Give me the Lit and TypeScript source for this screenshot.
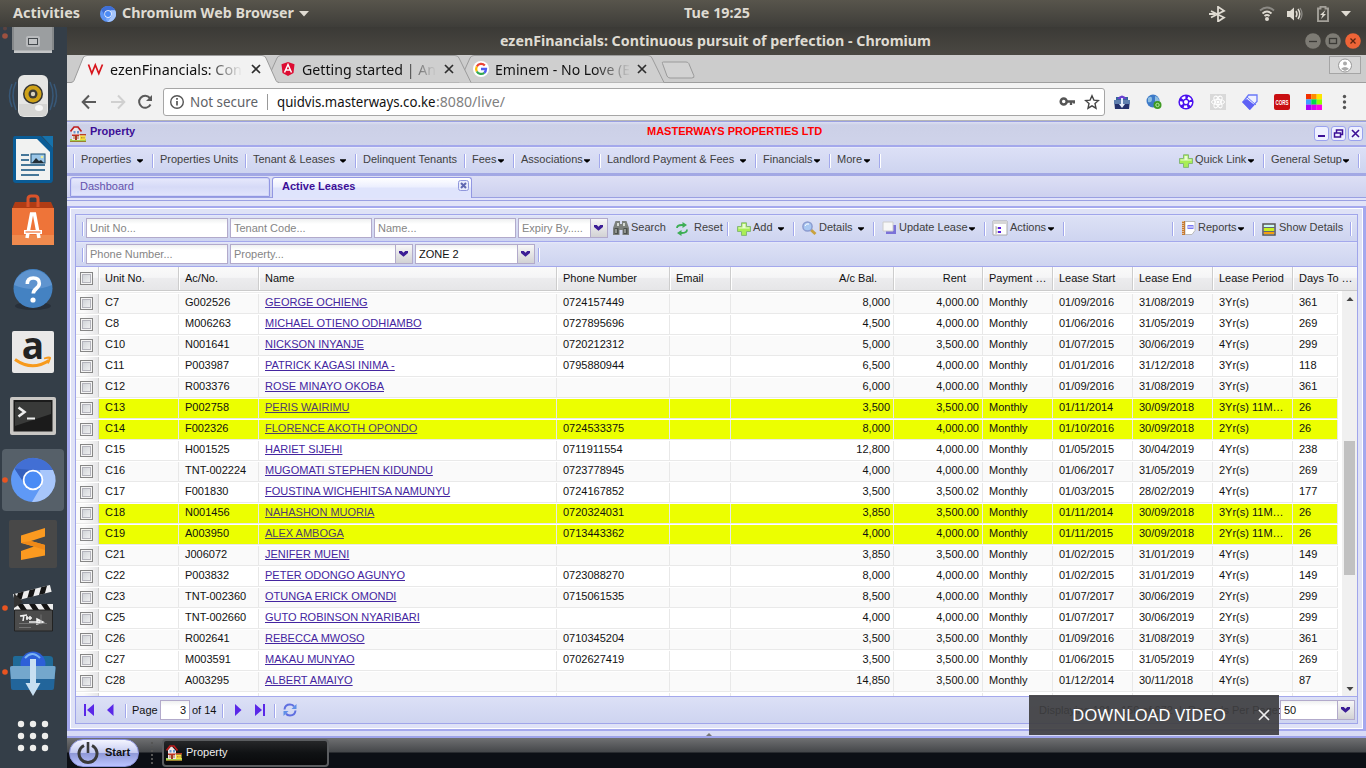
import { LitElement, html, svg, css, nothing } from "lit";
import { customElement } from "lit/decorators.js";

type Lease = [string, string, string, string, string, string, string, string, string, string];

const LEASES: Lease[] = [
  ["C7", "G002526", "GEORGE OCHIENG", "0724157449", "8,000", "4,000.00", "01/09/2016", "31/08/2019", "3Yr(s)", "361"],
  ["C8", "M006263", "MICHAEL OTIENO ODHIAMBO", "0727895696", "4,500", "4,000.00", "01/06/2016", "31/05/2019", "3Yr(s)", "269"],
  ["C10", "N001641", "NICKSON INYANJE", "0720212312", "5,000", "3,500.00", "01/07/2015", "30/06/2019", "4Yr(s)", "299"],
  ["C11", "P003987", "PATRICK KAGASI INIMA -", "0795880944", "6,500", "4,000.00", "01/01/2016", "31/12/2018", "3Yr(s)", "118"],
  ["C12", "R003376", "ROSE MINAYO OKOBA", "", "6,000", "4,000.00", "01/09/2016", "31/08/2019", "3Yr(s)", "361"],
  ["C13", "P002758", "PERIS WAIRIMU", "", "3,500", "3,500.00", "01/11/2014", "30/09/2018", "3Yr(s) 11M…", "26"],
  ["C14", "F002326", "FLORENCE AKOTH OPONDO", "0724533375", "8,000", "4,000.00", "01/10/2016", "30/09/2018", "2Yr(s)", "26"],
  ["C15", "H001525", "HARIET SIJEHI", "0711911554", "12,800", "4,000.00", "01/05/2015", "30/04/2019", "4Yr(s)", "238"],
  ["C16", "TNT-002224", "MUGOMATI STEPHEN KIDUNDU", "0723778945", "4,000", "4,000.00", "01/06/2017", "31/05/2019", "2Yr(s)", "269"],
  ["C17", "F001830", "FOUSTINA WICHEHITSA NAMUNYU", "0724167852", "3,500", "3,500.02", "01/03/2015", "28/02/2019", "4Yr(s)", "177"],
  ["C18", "N001456", "NAHASHON MUORIA", "0720324031", "3,850", "3,500.00", "01/11/2014", "30/09/2018", "3Yr(s) 11M…", "26"],
  ["C19", "A003950", "ALEX AMBOGA", "0713443362", "4,000", "4,000.00", "01/11/2015", "30/09/2018", "2Yr(s) 11M…", "26"],
  ["C21", "J006072", "JENIFER MUENI", "", "3,850", "3,500.00", "01/02/2015", "31/01/2019", "4Yr(s)", "149"],
  ["C22", "P003832", "PETER ODONGO AGUNYO", "0723088270", "8,000", "4,000.00", "01/02/2015", "31/01/2019", "4Yr(s)", "149"],
  ["C23", "TNT-002360", "OTUNGA ERICK OMONDI", "0715061535", "8,500", "4,000.00", "01/07/2017", "30/06/2019", "2Yr(s)", "299"],
  ["C25", "TNT-002660", "GUTO ROBINSON NYARIBARI", "", "4,000", "4,000.00", "01/07/2017", "30/06/2019", "2Yr(s)", "299"],
  ["C26", "R002641", "REBECCA MWOSO", "0710345204", "3,500", "3,500.00", "01/09/2016", "31/08/2019", "3Yr(s)", "361"],
  ["C27", "M003591", "MAKAU MUNYAO", "0702627419", "3,500", "3,500.00", "01/06/2015", "31/05/2019", "4Yr(s)", "269"],
  ["C28", "A003295", "ALBERT AMAIYO", "", "14,850", "3,500.00", "01/12/2014", "30/11/2018", "4Yr(s)", "87"],
];

const HEADS = ["Unit No.", "Ac/No.", "Name", "Phone Number", "Email", "A/c Bal.", "Rent", "Payment …", "Lease Start", "Lease End", "Lease Period", "Days To …"];

/* Text run set to an exact advance width. */
const run = (text: string, w: number, size: number, fill: string, bold = false, y = 16) => html`<svg class="run" width=${w + 2} height="22"><text x="0" y=${y} textLength=${w} lengthAdjust="spacingAndGlyphs" font-size=${size} font-weight=${bold ? 700 : 400} fill=${fill}>${text}</text></svg>`;

/* Slots laid end to end; each entry is the slot's start and its content. */
const track = (start: number, end: number, slots: [number, unknown][]) => {
  const first = slots[0][0] - start;
  return slots.map((s, i) => {
    const w = (i + 1 < slots.length ? slots[i + 1][0] : end) - s[0];
    return html`<div class="slot" style="width:${w}px;margin-left:${i ? 0 : first}px">${s[1]}</div>`;
  });
};

const arrow = html`<svg class="arrow" width="6" height="4"><path d="M0 .3h6v.9L3.600 3.600H2.400L0 1.200z" fill="#000"/></svg>`;
const sep = html`<i class="sep"></i>`;
const menu = (text: string, drop = false) => html`${sep}<span class="mt">${text}</span>${drop ? arrow : nothing}`;
const plus = html`<svg width="14" height="14"><path d="M4.500.8h5v3.700h4v5h-4v3.900h-5V9.500h-4v-5h4z" fill="#a9ee55" stroke="#86b878"/><path d="M5.500 2h3v3.500h4v1H1.500v-1h4z" fill="#e9fbd5"/></svg>`;
const house = (s = 16) => html`<svg width=${s} height=${s} viewBox="0 0 16 16"><path d="M0 13h16v3H0z" fill="#a5cf50"/><path d="M0 15h16v1H0z" fill="#9a8030"/><path d="M2 5l3.500-4L10 6v8H2z" fill="#f0e8e8"/><path d="M.5 5.500L4 1h4l3.500 4.500" fill="none" stroke="#c01c1c" stroke-width="1.600"/><path d="M3.500 5h2v2.500h-2zm3.500 0h2v2.500H7z" fill="#6a9ad0"/><path d="M2 8.500h7V10H2z" fill="#c03020"/><path d="M3 10h2v3H3zm4 0h2v3H7z" fill="#c8a890"/><path d="M5 10h2v4H5z" fill="#a83820"/><path d="M9.500 8h6.500v1.500H9.500z" fill="#b8402a"/><path d="M10 9.500h5.500V14H10z" fill="#f7dc40"/><path d="M11 11h1.500v1.500H11zm2.500 0h1v1.500h-1z" fill="#b89030"/></svg>`;
const chev = html`<svg width="9" height="6"><path d="M0 0h2.800L4.500 1.700 6.200 0H9v2L4.500 5.800 0 2z" fill="#3c1e96"/></svg>`;
const trigger = html`<span class="trigger">${chev}</span>`;
const field = (text: string, w: number, combo = false, value = false) => html`<div class="field ${value ? "value" : ""}" style="width:${w}px"><span>${text}</span>${combo ? trigger : nothing}</div>`;

const chromium = (s: number) => html`<svg width=${s} height=${s} viewBox="0 0 44 44"><circle cx="22" cy="22" r="22" fill="#5c94f4"/><path d="M3.500 10.500A22 22 0 0 1 41.700 12H22l-8.500 15z" fill="#3f6fd6"/><path d="M41.700 12A22 22 0 0 1 21 44l10.500-16.500L29 12z" fill="#a5c5fb"/><path d="M31 27.500L21 44l-5-8 5-6z" fill="#7aa9f8"/><circle cx="22" cy="22" r="10" fill="#fff"/><circle cx="22" cy="22" r="8.200" fill="#4d8cf5"/></svg>`;

const dockSvg = (body: unknown) => html`<svg width="66" height="64" viewBox="0 0 66 64">${body}</svg>`;

const DOCK = [
  svg`<path d="M12 24h42v26H12z" fill="#85888a"/><path d="M14 24h38v29H14z" fill="#9b9ea0"/><path d="M14 50.500h38v2.500H14z" fill="#c4c6c7"/><rect x="26" y="36" width="14" height="11" rx="2" fill="#b9bbbd"/><rect x="28.500" y="38.500" width="9" height="6" fill="#c2c4c6" stroke="#44494d"/><circle cx="5" cy="36" r="2.800" fill="#9c5140"/><circle cx="5" cy="28.500" r="2" fill="#5c4340"/>`,
  svg`<g fill="none" stroke="#385878" stroke-width="1.500"><path d="M16 18q-6 13 0 28M12 20q-5 12 0 23M50 18q6 13 0 28M54 20q5 12 0 23"/></g><rect x="18" y="11" width="30" height="42" rx="6" fill="#e6e6e4"/><path d="M19 40h28v7q0 5-4 5H23q-4 0-4-5z" fill="#d6d6d4"/><circle cx="33" cy="30" r="10" fill="#333"/><circle cx="33" cy="30" r="8.500" fill="#cfa218"/><circle cx="33" cy="30" r="4.500" fill="#3b3b38"/><circle cx="33" cy="30" r="2.200" fill="#d9d3c0"/><ellipse cx="39" cy="44" rx="4" ry="3" fill="#f6f6f6"/>`,
  svg`<path d="M15 8h26l12 12v31q0 4-3 4H16q-3 0-3-3V11q0-3 2-3z" fill="#0a5c96"/><path d="M42 8h11v12z" fill="#1672ac"/><path d="M16 11h21l13 13v28H16z" fill="#f1f2f1"/><path d="M21 27h8m-8 5h8m-8 5h24m-24 5h24m-24 5h18" stroke="#0d4f7c" stroke-width="1.700"/><path d="M21 23h8" stroke="#0d4f7c" stroke-width="0"/><rect x="31" y="26" width="14" height="9" fill="#9ac6e8" stroke="#164b70"/><path d="M32 35l4-5 3 3 2-1 3 3z" fill="#222e36"/><circle cx="42" cy="29" r="1.300" fill="#ee9"/>`,
  svg`<path d="M12 17l3-7h36l3 7z" fill="#b03c14"/><path d="M12 16h42v37H12z" fill="#ee7439"/><path d="M12 43h42v10H12z" fill="#f08a4e"/><path d="M28 15V7q0-3 3-3h4q3 0 3 3v8" fill="none" stroke="#d9532a" stroke-width="3"/><path d="M27 46l4.500-24h3L39 46" fill="none" stroke="#fff" stroke-width="3.500"/><path d="M24 40h18" stroke="#fff" stroke-width="4"/><path d="M25.500 40h15" stroke="#ee7439" stroke-width="1.200"/>`,
  svg`<ellipse cx="33" cy="50" rx="18" ry="4" fill="#28303a"/><circle cx="33" cy="32.500" r="19.500" fill="#4482c2"/><path d="M14 29a19.500 19.500 0 0 1 38 0q-19 8-38 0z" fill="#5f94cf"/><path d="M27.300 28q0-6 6-6t6 5.500c0 5-6 5-6 10" fill="none" stroke="#fff" stroke-width="3.600"/><circle cx="33" cy="44" r="2.600" fill="#fff"/>`,
  svg`<rect x="12" y="11" width="42" height="42" rx="2" fill="#e9e8e8"/><text x="33" y="39" text-anchor="middle" font-family="Open Sans" font-weight="700" font-size="37" fill="#222">a</text><path d="M15 39.500q17 12 34 1" fill="none" stroke="#f79a1c" stroke-width="3"/><path d="M44 38.500q7-2 6 0t-2 5" fill="none" stroke="#f79a1c" stroke-width="1.800"/>`,
  svg`<rect x="10" y="13" width="46" height="38" rx="2" fill="#c9c7c4"/><rect x="13.500" y="16" width="39" height="31.500" fill="#1b1b1b"/><path d="M15 18h36v12L15 42z" fill="#393a39"/><path d="M18.500 23.500l6 4.500-6 4.500" fill="none" stroke="#eee" stroke-width="2.600"/><path d="M27 34.500h8" stroke="#eee" stroke-width="2"/>`,
  svg`<rect x="2" y="1" width="62" height="62" rx="4" fill="#566069"/><g transform="translate(11 10)"><circle cx="22" cy="22" r="22" fill="#5f99f6"/><path d="M3.500 10.500A22 22 0 0 1 42 12H22l-9 13z" fill="#426fd4"/><path d="M3.500 10.500L22 12l-9 13z" fill="#3560bd"/><path d="M42 12A22 22 0 0 1 21 44l10-17L29 12z" fill="#a7c6fb"/><circle cx="22" cy="22" r="10.300" fill="#fff"/><circle cx="22" cy="22" r="8.500" fill="#4a8bf5"/></g><circle cx="5" cy="32" r="2.800" fill="#e95420"/>`,
  svg`<rect x="9" y="8" width="48" height="48" rx="2" fill="#484848"/><path d="M21 23.500l24-7.500v8.500L31 29l14 4v10.500L21 48v-9l13-4.500L21 31z" fill="#fb9a20"/><path d="M21 30.500l10-1.500 14 4v5z" fill="#f08a18"/>`,
  svg`<g transform="rotate(-14 15 26)"><path d="M15 18h38v7H15z" fill="#eee"/><path d="M20 18h6l-4 7h-6zm12 0h6l-4 7h-6zm12 0h6l-4 7h-6z" fill="#151515"/></g><path d="M14 28h39v6H14z" fill="#eee"/><path d="M17 28h6l4 6h-6zm12 0h6l4 6h-6zm12 0h6l4 6h-6z" fill="#151515"/><path d="M14 17l9 9-9 6z" fill="#333"/><path d="M14.500 34h38v21h-38z" fill="#4b4b4b" stroke="#222"/><path d="M20 40l7-1m-3 0l-1 6m4-5v4m3-4v4m-4-2h6m-3 4h7m0 0h6m-5-3l6 3-6 2z" stroke="#f2f2f2" stroke-width="1.500" fill="none"/><path d="M19 47.500h28m-28 4h12m10-13v10" stroke="#858585" stroke-width=".7"/><circle cx="5" cy="32" r="2.800" fill="#e95420"/>`,
  svg`<path d="M13 18q0-2 2-2h34q4 0 4 3v20H13z" fill="#1f6a98"/><circle cx="33" cy="24" r="12.500" fill="#2d5fd8"/><path d="M25 18q7-8 15 0" stroke="#7cb4f5" stroke-width="2" fill="none"/><path d="M10 28q0-2 2-2h42q2 0 1.500 2L54 48q0 2-2 2H13q-2 0-2-2z" fill="#22659b"/><path d="M10 28q0-2 2-2h42q2 0 1.500 2L54.500 39H11z" fill="#74a7cd"/><path d="M30 19h6v24h4.500l-7.500 13-7.500-13H30z" fill="#c8dff1"/><circle cx="5" cy="32" r="2.800" fill="#e95420"/>`,
  svg`${[20, 32, 44].map((y) => [21, 33, 45].map((x) => svg`<circle cx=${x} cy=${y} r="3.200" fill="#eeeeec"/>`))}`,
];

@customElement("app-root")
export class AppRoot extends LitElement {
  static styles = css`
    :host { display: block; width: 1366px; height: 768px; overflow: hidden; position: relative; font: 11px/13px "Liberation Sans", Arial, sans-serif; color: #111; }
    * { box-sizing: border-box; }
    svg { display: block; flex: none; }
    .run { overflow: visible; font-family: "Noto Sans", sans-serif; }
    .screen { display: grid; grid-template: 27px 741px / 67px 1299px; }
    .panel { grid-column: 1 / 3; display: flex; background: linear-gradient(#58554c, #3e3d39); align-items: center; }
    .slot { display: flex; align-items: center; flex: none; height: 100%; min-width: 0; white-space: nowrap; }
    .dock { background: #343e48; display: flex; flex-direction: column; justify-content: flex-end; overflow: hidden; }
    .win { display: flex; flex-direction: column; overflow: hidden; min-width: 0; }
    .title { height: 28px; display: flex; background: linear-gradient(#3b3a36, #4a4842); flex: none; }
    .tabs { height: 28px; display: grid; background: #ccc; flex: none; }
    .tabs > * { grid-area: 1 / 1; }
    .tabrow { display: flex; height: 28px; }
    .clip { overflow: hidden; -webkit-mask-image: linear-gradient(90deg, #000 72%, transparent 99%); }
    .nav { height: 38px; display: flex; background: #f2f2f2; border-bottom: 1px solid #b4b4b4; flex: none; }
    .omni { height: 28px; width: 942px; background: #fff; border: 1px solid #a6a6a6; border-radius: 3px; display: flex; align-items: center; }
    .page { flex: 1; background: #dfe1f7; display: flex; flex-direction: column; border-top: 1px solid #9aa0e2; }
    .head { height: 23px; flex: none; background: linear-gradient(#dcdff2 0, #ccd0e7 3px, #cfd3ea); display: flex; align-items: flex-start; font-weight: bold; }
    .head .slot { height: 19px; }
    .purple { color: #3c0f96; }
    .red { color: #f00; }
    .tool { width: 15px; height: 15px; border: 1px solid #9aa2ee; border-radius: 3px; background: #eef0ff; display: flex; margin-top: 4px; }
    .menubar { height: 31px; flex: none; border-top: 2px solid #a4a8ec; border-bottom: 3px solid #9da2e6; border-bottom-color: #a2a8e4; background: linear-gradient(#f4f5fe 0, #dce0f6 1px, #ced4f0); display: flex; color: #3f3f3f; }
    .sep { width: 2px; height: 14px; border-left: 1px solid #a2a8ec; border-right: 1px solid #fff; flex: none; margin-top: 1px; }
    .mt { margin-left: 6px; margin-top: -1px; }
    .arrow { margin: 2px 9px 0 auto; }
    .strip { height: 22px; flex: none; background: linear-gradient(#dddff5, #cdd1ef); border-bottom: 1px solid #9aa0e2; display: flex; padding-left: 3px; gap: 2px; }
    .tab { width: 200px; height: 20px; margin-top: 1px; border: 1px solid #9297e2; border-radius: 3px 3px 0 0; background: linear-gradient(#e7e9fc, #d6daf7 50%, #e2e5fc); box-shadow: inset 0 0 0 1px #d2d6f8; padding: 2px 0 0 9px; color: #6452ac; display: flex; }
    .tab.on { height: 21px; background: linear-gradient(#fff, #eceffe 45%, #dfe4fc 50%); color: #3c0f96; font-weight: bold; border-bottom: none; justify-content: space-between; box-shadow: none; padding-right: 2px; }
    .spacer { height: 8px; flex: none; background: linear-gradient(#e2e4fb 2px, #9aa0e2 2px, #9aa0e2 3px, #e1e3f8 3px); }
    .frame { flex: none; height: 525px; border: 2px solid #a4a8ee; border-right-width: 3px; border-left-width: 3px; padding: 6px 5px 5px 5px; box-shadow: inset 1px 1px #fff, inset -1px -1px #fff; background: #dfe2f6; }
    .box { height: 510px; border: 1px solid #a0a5ea; background: #fff; display: flex; flex-direction: column; }
    .tb { height: 27px; flex: none; border-bottom: 1px solid #a4a8ec; background: linear-gradient(#e6e9fa 0, #dce0f5 2px, #ced4f0); display: flex; color: #404040; }
    .tb.two { height: 25px; }
    .tb .lab { margin-left: 2px; margin-top: -1px; }
    .field { height: 20px; border: 1px solid #b2aacb; background: linear-gradient(#eef0f0, #fff 5px); color: #858585; display: flex; align-items: center; padding-left: 3px; }
    .field.value { color: #111; }
    .field span:first-child { flex: 1; }
    .trigger { flex: none; width: 17px; height: 18px; border-left: 1px solid #b2aacb; background: linear-gradient(#f7f7f7, #d2d2d4); display: flex; align-items: center; justify-content: center; padding-right: 1px; }
    .gh, .gr { display: grid; grid-template-columns: 23px 80px 80px 298px 113px 61px 163px 89px 70px 80px 80px 80px 45px; }
    .gh { flex: none; height: 24px; grid-template-columns: 23px 80px 80px 298px 113px 61px 163px 89px 70px 80px 80px 80px 64px; background: linear-gradient(#fafafa, #f5f5f6 45%, #ececee 50%, #e6e6e8); border-bottom: 1px solid #cbcbcb; }
    .gh > div { border-right: 1px solid #cdcdcd; box-shadow: inset 1px 0 #fff; padding: 5px 3px 0 6px; overflow: hidden; white-space: nowrap; }
    .gh > div:last-child { border-right: none; padding-right: 0; }
    .gh > .chk, .gr > .chk { padding: 0 0 0 4px; display: flex; align-items: center; border-right: 1px solid #cfcfcf; }
    .gh > .r { padding-right: 16px; }
    .r { text-align: right; }
    .body { flex: 1; display: flex; min-height: 0; overflow: hidden; }
    .rows { width: 1265px; padding-top: 1px; }
    .pre { height: 1px; width: 1262px; background: #ededed; }
    .gr { width: 1262px; height: 21px; border-top: 1px solid #fff; border-bottom: 1px solid #e9e9e9; background: #fff; }
    .gr.alt { background: #fafafa; }
    .gr.hot > .c { background: #ecff00; }
    .gr > .c { border-right: 1px solid #e8e8e8; padding: 2px 2px 0 6px; white-space: nowrap; overflow: hidden; }
    .gr > .c.r { padding-right: 3px; }
    .gr > .chk { background: linear-gradient(90deg, #fafafa 35%, #e6e6e8); }
    .box13 { width: 13px; height: 13px; border: 1px solid #868686; background: linear-gradient(135deg, #c9cdd2, #f6f6f6); box-shadow: inset 0 0 0 1px #f4f4f4, inset 0 0 0 2px #b4b4bc; }
    u { color: #4425a0; text-underline-offset: 1px; }
    .hot u { color: #50406a; }
    .sb { width: 15px; background: #f0f0f0; display: flex; flex-direction: column; align-items: center; margin-left: 1px; padding-top: 1px; }
    .thumb { width: 11px; height: 134px; background: #c1c1c1; margin-top: 139px; }
    .sb svg:last-child { margin-top: auto; }
    .pager { height: 27px; flex: none; border-top: 1px solid #a4a8ec; background: linear-gradient(#dce0f6, #ced4f0); display: flex; }
    .pagenum { width: 30px; justify-content: flex-end; padding-right: 3px; }
    .field.pagenum span:first-child { flex: none; }
    .below { height: 7px; flex: none; background: #d8dbf6; border-bottom: 2px solid #9ea3ea; display: flex; justify-content: center; align-items: center; padding-right: 16px; }
    .task { height: 30px; flex: none; background: linear-gradient(#6f7072, #45474a 14px, #0c0f15 15px, #0c0f15); display: flex; align-items: center; padding-left: 2px; color: #eee; }
    .start { width: 70px; height: 28px; border-radius: 14px; border: 1px solid #8c93dc; background: linear-gradient(#f4f5ff, #c5cbf2 48%, #8e97d6 50%, #bac4ff); color: #111; font-weight: bold; display: flex; align-items: center; gap: 5px; padding-left: 6px; }
    .start span, .appbtn span { margin-top: -2px; }
    .grip { width: 2px; height: 22px; margin-left: 12px; background: repeating-linear-gradient(#555 0 2px, transparent 2px 4px); }
    .appbtn { width: 167px; height: 28px; margin-left: 9px; border: 2px solid #5b5d60; border-radius: 4px; background: linear-gradient(#262729, #101214 50%, #08090b); display: flex; align-items: center; gap: 4px; padding-left: 2px; }
    .toast { position: absolute; left: 1029px; top: 695px; width: 250px; height: 40px; background: rgba(62, 62, 64, .92); display: flex; align-items: center; padding-left: 43px; }
    .toast .x { margin-left: 30px; }
    .icotop { padding-top: 4px; }
    .ql { margin: -1px 0 0 2px; }
    .plus { padding-top: 2px; }
  `;

  private icon(w: number, body: unknown, h = 16) {
    return html`<svg width=${w} height=${h} viewBox="0 0 ${w} ${h}">${body}</svg>`;
  }

  private shell() {
    const x = html`<svg width="10" height="10"><path d="M1 1l8 8M9 1l-8 8" stroke="#2d2d2d" stroke-width="1.700"/></svg>`;
    return html`
      <div class="title">${track(67, 1366, [
        [500, run("ezenFinancials: Continuous pursuit of perfection - Chromium", 431, 14, "#dfdbd2", true)],
        [1305, this.icon(56, svg`<circle cx="8" cy="8" r="7.800" fill="#7d7b74"/><circle cx="28" cy="8" r="7.800" fill="#7d7b74"/><circle cx="48" cy="8" r="7.800" fill="#ee6437"/><path d="M4 8.500h8" stroke="#3b3a36" stroke-width="1.300"/><rect x="24.500" y="5.500" width="7" height="5" fill="none" stroke="#3b3a36" stroke-width="1.300"/><path d="M45.500 5.500l5 5m0-5l-5 5" stroke="#5b2410" stroke-width="1.300"/>`)],
      ])}</div>
      <div class="tabs">
        <svg width="1299" height="28"><path d="M0 27.500h1299" stroke="#9e9e9e"/>
          <path d="M392 27.500L403 3q1.200-2.500 4-2.500H581q3 0 4 2.500L597 27.500" fill="#cfcfcf" stroke="#9b9b9b"/>
          <path d="M199 27.500L210 3q1.200-2.500 4-2.500H388q3 0 4 2.500L404 27.500" fill="#cfcfcf" stroke="#9b9b9b"/>
          <path d="M0 27.500h4q2 0 3-2L16 3q1-2.500 4-2.500H195q3 0 4 2.500l10 22.500q1 2 3 2V28H0z" fill="#f2f2f2"/>
          <path d="M0 27.500h4q2 0 3-2L16 3q1-2.500 4-2.500H195q3 0 4 2.500l10 22.500q1 2 3 2" fill="none" stroke="#9b9b9b"/>
          <path d="M596.500 8.500q-1-1.500 1-1.500H620q2 0 2.800 1.500l5 12q1 2.500-2 2.500H604q-2 0-3-2z" transform="translate(-1 0)" fill="#d2d2d2" stroke="#9a9a9a"/>
          <rect x="1262.500" y="1.500" width="31" height="17" fill="#d6d6d6" stroke="#a5a5a5"/><circle cx="1278" cy="10.500" r="6.500" fill="#fff" stroke="#999"/><circle cx="1278" cy="8.500" r="2" fill="#aaa"/><path d="M1274 14q4-4 8 0l-4 2z" fill="#aaa"/></svg>
        <div class="tabrow">${track(67, 1366, [
          [87, this.icon(17, svg`<path d="M1.500 3.500l3.300 9L8.300 4l3.500 8.500 3.700-9" fill="none" stroke="#d8141c" stroke-width="1.700"/>`)],
          [109.500, html`<div class="clip">${run("ezenFinancials: Con", 132, 15, "#111", false, 17)}</div>`],
          [251, x],
          [281, this.icon(14, svg`<path d="M7 1l6.500 2.300-1 8.700L7 15l-5.500-3-1-8.700z" fill="#dd0b31"/><path d="M3.500 11.500L7 3.500l3.500 8M5 9h4" fill="none" stroke="#fff" stroke-width="1.500"/>`)],
          [302, html`<div class="clip">${run("Getting started | An", 134, 15, "#111", false, 17)}</div>`],
          [444, x],
          [473, this.icon(16, svg`<circle cx="8" cy="8" r="8" fill="#fff"/><g fill="none" stroke-width="2.300"><path d="M11.800 4.500A5 5 0 0 0 3.800 5.500" stroke="#ea4335"/><path d="M3.800 5.500a5 5 0 0 0 0 5" stroke="#fbbc05"/><path d="M3.800 10.500a5 5 0 0 0 7.500 1.300" stroke="#34a853"/><path d="M11.300 11.800A5 5 0 0 0 13 8H8" stroke="#4f5cf0"/></g>`)],
          [495, html`<div class="clip">${run("Eminem - No Love (E", 135, 15, "#111", false, 17)}</div>`],
          [637, x],
        ])}</div>
      </div>
      <div class="nav">${track(67, 1366, [
        [81, this.icon(16, svg`<path d="M15 8H2m6-6.500L1.700 8 8 14.500" fill="none" stroke="#5a5a5a" stroke-width="2"/>`)],
        [110, this.icon(16, svg`<path d="M1 8h13M8 1.500L14.300 8 8 14.500" fill="none" stroke="#d0d0d0" stroke-width="2"/>`)],
        [137, this.icon(16, svg`<path d="M13.500 10.500A6 6 0 1 1 12.800 4" fill="none" stroke="#5a5a5a" stroke-width="2"/><path d="M15 1v6H9z" fill="#5a5a5a"/>`)],
        [163, html`<div class="omni">${track(164, 1105, [
          [169, this.icon(16, svg`<circle cx="8" cy="8" r="6.300" fill="none" stroke="#555" stroke-width="1.400"/><path d="M8 7v4.500M8 4v1.700" stroke="#555" stroke-width="1.700"/>`)],
          [190, run("Not secure", 68, 14.5, "#5f6368")],
          [267, html`<svg width="1" height="16"><path d="M.5 0v16" stroke="#999"/></svg>`],
          [277, run("quidvis.masterways.co.ke", 158.5, 15, "#111")],
          [435.500, run(":8080/live/", 69, 15, "#808080")],
          [1059, this.icon(16, svg`<circle cx="4.700" cy="7.500" r="3" fill="none" stroke="#555" stroke-width="2.500"/><path d="M7 7.500h8v2M12 7.500v3.500" stroke="#555" stroke-width="2.300" fill="none"/>`)],
          [1084, this.icon(16, svg`<path d="M8 1.800l1.900 4.300 4.600.4-3.500 3.100 1 4.600L8 11.800l-4 2.400 1-4.600-3.500-3.100 4.600-.4z" fill="none" stroke="#444" stroke-width="1.400"/>`)],
        ])}</div>`],
        [1114, this.icon(16, svg`<path d="M2 3h12v4H2z" fill="#34679c"/><path d="M3 5q5-7 10 0z" fill="#6a3fd0"/><path d="M0 6h16l-1 9H1z" fill="#23306c"/><path d="M0 6h16v4H0z" fill="#5f7fae"/><path d="M7 4h2v6h2l-3 4-3-4h2z" fill="#e4ecfa"/>`)],
        [1146, this.icon(16, svg`<circle cx="7" cy="7" r="6.500" fill="#3d7ac8"/><path d="M2 4q4-3 4 1T2 8zM9 2q4 1 4 5L9 8z" fill="#8dbde0"/><circle cx="11.500" cy="11" r="4" fill="#3f9a22"/><circle cx="11.500" cy="11" r="1.700" stroke="#b8e8a8" fill="none"/>`)],
        [1178, this.icon(16, svg`<circle cx="8" cy="8" r="7.600" fill="#4a10f0"/><circle cx="8" cy="8" r="4.800" fill="none" stroke="#fff" stroke-width="2.600" stroke-dasharray="3.400 2.600"/><circle cx="8" cy="8" r="2" fill="#fff"/>`)],
        [1210, this.icon(16, svg`<path d="M0 0h16v16H0z" fill="#d9d9d9"/><g fill="none" stroke="#fff"><ellipse cx="8" cy="8" rx="6.500" ry="2.600"/><ellipse cx="8" cy="8" rx="6.500" ry="2.600" transform="rotate(60 8 8)"/><ellipse cx="8" cy="8" rx="6.500" ry="2.600" transform="rotate(120 8 8)"/></g><circle cx="8" cy="8" r="1.500" fill="#fff"/>`)],
        [1242, this.icon(16, svg`<path d="M6.500 1H15v6.500L7.500 15 1 8z" fill="#eef0ff" stroke="#6a78f8" stroke-width="1.300"/><path d="M0 8l5-3 7.500 6L8 16z" fill="#5f62f5"/><path d="M5 3l9 8" stroke="#6a78f8"/>`)],
        [1274, this.icon(16, svg`<rect width="16" height="16" rx="2" fill="#c90f12"/><text x="1.500" y="11" font-size="8" font-weight="700" textLength="13" lengthAdjust="spacingAndGlyphs" fill="#fff">CORS</text>`)],
        [1306, this.icon(16, svg`${[["#f33000", "#ff8c00", "#ffe400"], ["#3c9cff", "#00d84c", "#8cff00"], ["#a800f8", "#d800f0", "#ff00e8"]].map((r, j) => r.map((c, i) => svg`<rect x=${i * 5.33} y=${j * 5.33} width="5.400" height="5.400" fill=${c}/>`))}`)],
        [1342, this.icon(5, svg`<circle cx="2.500" cy="2.500" r="1.700" fill="#555"/><circle cx="2.500" cy="8" r="1.700" fill="#555"/><circle cx="2.500" cy="13.500" r="1.700" fill="#555"/>`)],
      ])}</div>`;
  }

  private grid() {
    return html`
      <div class="gh"><div class="chk"><i class="box13"></i></div>${HEADS.map((h, i) => html`<div class=${i === 5 || i === 6 ? "r" : ""}>${h}</div>`)}</div>
      <div class="body">
        <div class="rows"><div class="pre"></div>
          ${LEASES.map((l, i) => {
            const hot = l[9] === "26";
            return html`<div class="gr ${i % 2 ? "" : "alt"} ${hot ? "hot" : ""}"><div class="chk"><i class="box13"></i></div>
              <div class="c">${l[0]}</div><div class="c">${l[1]}</div><div class="c"><u>${l[2]}</u></div><div class="c">${l[3]}</div><div class="c"></div>
              <div class="c r">${l[4]}</div><div class="c r">${l[5]}</div><div class="c">Monthly</div><div class="c">${l[6]}</div><div class="c">${l[7]}</div><div class="c">${l[8]}</div><div class="c">${l[9]}</div></div>`;
          })}
          <div class="gr">${Array.from({ length: 13 }, (_, i) => html`<div class=${i ? "c" : "chk"}></div>`)}</div>
        </div>
        <div class="sb"><svg width="8" height="10"><path d="M.5 9L4 5l3.500 4z" fill="#444"/></svg><div class="thumb"></div><svg width="8" height="10"><path d="M.5 1h7L4 5z" fill="#444"/></svg></div>
      </div>`;
  }

  private page() {
    const doc = svg`<path d="M1 1h14v14H1z" fill="#fff" stroke="#aaa"/>`;
    return html`
      <div class="page">
        <div class="head">${track(67, 1366, [
          [70, html`<span class="icotop">${house()}</span>`],
          [90, html`<span class="purple">Property</span>`],
          [647, html`<span class="red">MASTERWAYS PROPERTIES LTD</span>`],
          [1314, html`<span class="tool">${this.icon(13, svg`<path d="M3 9h7" stroke="#3c0f96" stroke-width="2"/>`, 13)}</span>`],
          [1331, html`<span class="tool">${this.icon(13, svg`<path d="M4.500 6V3h6v4.500h-2M2.500 6h6v4h-6z" fill="none" stroke="#3c0f96" stroke-width="1.500"/>`, 13)}</span>`],
          [1348, html`<span class="tool">${this.icon(13, svg`<path d="M3 3l7 7m0-7l-7 7" stroke="#3c0f96" stroke-width="1.600"/>`, 13)}</span>`],
        ])}</div>
        <div class="menubar">${track(67, 1366, [
          [73, menu("Properties", true)], [152, menu("Properties Units")], [245, menu("Tenant & Leases", true)], [355, menu("Delinquent Tenants")],
          [464, menu("Fees", true)], [513, menu("Associations", true)], [599, menu("Landlord Payment & Fees", true)], [755, menu("Financials", true)],
          [829, menu("More", true)], [879, sep], [1179, html`<span class="plus">${plus}</span><span class="ql">Quick Link</span>${arrow}`],
          [1263, menu("General Setup", true)], [1358, sep],
        ])}</div>
        <div class="strip">
          <div class="tab">Dashboard</div>
          <div class="tab on">Active Leases${this.icon(11, svg`<rect x=".5" y=".5" width="10" height="10" rx="2" fill="#e8ebfb" stroke="#8f97dc"/><path d="M3 3l5 5m0-5L3 8" stroke="#6068b0" stroke-width="2"/>`, 11)}</div>
        </div>
        <div class="spacer"></div>
        <div class="frame"><div class="box">
          <div class="tb">${track(76, 1357, [
            [82, sep], [86, field("Unit No...", 142)], [230, field("Tenant Code...", 142)], [374, field("Name...", 142)], [518, field("Expiry By.....", 90, true)],
            [613, html`${this.icon(16, svg`<path d="M2.500 1H7v3h2V1h4.500L16 8v7H9.500v-5h-3v5H0V8z" fill="#7c807c"/><path d="M1.500 8h4v6h-4zm9 0h4v6h-4z" fill="#4c504c"/><path d="M2.500 9h1v4h-1zm9 0h1v4h-1zM4 3h2v3H4zm6 0h2v3h-2z" fill="#d6dad4"/>`)}<span class="lab">Search</span>`],
            [675, html`${this.icon(14, svg`<g fill="none" stroke="#3dae55" stroke-width="1.800"><path d="M2 8q0-3 5-3h1M12 9.500q0 3.500-5 3.500H6"/></g><path d="M7.500 2L12 5 7.500 8zM6.500 10v6L2 13z" fill="#3dae55"/>`)}<span class="lab">&nbsp;Reset</span>`],
            [727, sep],
            [737, html`<span class="plus">${plus}</span><span class="lab">Add</span>${arrow}`], [793, sep],
            [802, html`${this.icon(15, svg`<path d="M8.500 9.500l5 4.500" stroke="#c9a23e" stroke-width="3"/><circle cx="5.500" cy="6.500" r="4.600" fill="#a9c8f2" stroke="#8c9cd0" stroke-width="1.500"/><path d="M3 6q1-3 4-2" stroke="#fff" fill="none"/>`)}<span class="lab">Details</span>${arrow}`], [873, sep],
            [882, html`${this.icon(15, svg`<path d="M4 5h10v9H4z" fill="#7b72d8"/><path d="M1 2h10v9H1z" fill="#f7f7f7" stroke="#ccc"/>`)}<span class="lab">Update Lease</span>${arrow}`], [984, sep],
            [992, html`${this.icon(16, svg`${doc}<path d="M1 1h14v3H1z" fill="#d6d6d6"/><path d="M4 6v8M4 8h3m-3 4h3" stroke="#999" stroke-width=".8"/><path d="M6 7h3v2H6zm0 4h3v2H6z" fill="#5a20e0"/>`)}<span class="lab">Actions</span>${arrow}`], [1063, sep],
            [1172, sep],
            [1181, html`${this.icon(15, svg`<path d="M4 1.500h10v9l-3 4H4z" fill="#fff" stroke="#bbb"/><path d="M1 1h3v14H1z" fill="#c57a32"/><path d="M2 1v14" stroke="#fff" stroke-dasharray="1 1"/><path d="M6.500 5h6v4h-6z" fill="#7b7bf5"/><path d="M7 7h5" stroke="#fff"/>`)}<span class="lab">Reports</span>${arrow}`], [1253, sep],
            [1262, html`${this.icon(15, svg`<path d="M1 4h12v11H1z" fill="#eee" stroke="#555" stroke-width="1.500"/><path d="M2 5h10v2H2z" fill="#c8f8f0"/><path d="M2 8h10v3H2z" fill="#c8f020"/><path d="M2 12h10v2H2z" fill="#f5a010"/><path d="M1 7.500h12M1 11.500h12" stroke="#667"/>`)}<span class="lab">Show Details</span>`], [1350, sep],
          ])}</div>
          <div class="tb two">${track(76, 1357, [
            [82, sep], [86, field("Phone Number...", 142)], [230, field("Property...", 183, true)], [415, field("ZONE 2", 120, true, true)], [538, sep],
          ])}</div>
          ${this.grid()}
          <div class="pager">${track(76, 1357, [
            [83, this.icon(12, svg`<path d="M1 2h2v12H1zM11 2v12L4 8z" fill="#5a28e8"/>`)],
            [107, this.icon(8, svg`<path d="M6.500 2v12L0 8z" fill="#5a28e8"/>`)], [125, sep], [132, html`<span>Page</span>`],
            [160, html`<div class="field value pagenum"><span>3</span></div>`],
            [192, html`<span>of 14</span>`], [222, sep],
            [235, this.icon(8, svg`<path d="M0 2v12l6.500-6z" fill="#5a28e8"/>`)], [254, this.icon(12, svg`<path d="M9 2h2v12H9zM1 2v12l7-6z" fill="#5a28e8"/>`)], [274, sep],
            [282, this.icon(16, svg`<path d="M2.500 7.500Q3 2.500 8 2.500q3 0 4 2M13.500 8.500q-.5 5-5.500 5-3 0-4-2" fill="none" stroke="#5f6fe0" stroke-width="2"/><path d="M14.500 2v5H9.500zM1.500 14V9h5z" fill="#5f8fe8"/>`)],
            [1039, html`<span>Displaying 101 - 150 of 672 &nbsp;|&nbsp; Records Per Page:</span>`],
            [1280, field("50", 75, true, true)],
          ])}</div>
        </div></div>
        <div class="below">${this.icon(8, svg`<path d="M1 5l3-3 3 3z" fill="#777"/>`, 5)}</div>
        <div class="task">
          <div class="start">${this.icon(24, svg`<path d="M8 4.500a9 9 0 1 0 8 0" fill="none" stroke="#3a3a3a" stroke-width="3"/><path d="M12 1v11" stroke="#3a3a3a" stroke-width="2.600"/>`, 24)}<span>Start</span></div>
          <i class="grip"></i>
          <div class="appbtn">${house()}<span>Property</span></div>
        </div>
      </div>`;
  }

  render() {
    return html`
      <div class="screen">
        <div class="panel">${track(0, 1366, [
          [12.500, run("Activities", 67, 14, "#dfdbd2", true, 15)],
          [100, chromium(16)],
          [122, run("Chromium Web Browser", 172, 14, "#dfdbd2", true, 15)],
          [299, html`<svg width="10" height="6"><path d="M0 0h10L5 5.500z" fill="#dfdbd2"/></svg>`],
          [684, run("Tue 19:25", 66, 14, "#dfdbd2", true, 15)],
          [1209, this.icon(18, svg`<path d="M2 5l13 6.500-6 4V.8l6 4L2 11.500M0 8h6" fill="none" stroke="#dfdbd2" stroke-width="1.800"/>`)],
          [1259, this.icon(16, svg`<g fill="none" stroke-width="1.800"><path d="M1 4.500q7-6 14 0" stroke="#8b8984"/><path d="M3.500 7.500q4.500-4 9 0M5.500 10q2.500-2 5 0" stroke="#dfdbd2"/></g><circle cx="8" cy="13" r="2" fill="#dfdbd2"/>`)],
          [1286, this.icon(17, svg`<path d="M1 5h3l4-3.500v13L4 11H1z" fill="#dfdbd2"/><path d="M10 5q2 3 0 6M12 3q3.500 5 0 10" stroke="#dfdbd2" stroke-width="1.500" fill="none"/><path d="M14 2q4 6 0 12" stroke="#8b8984" stroke-width="1.300" fill="none"/>`)],
          [1317, this.icon(12, svg`<path d="M3.500 2.500V.8h5v1.700H11v12.700H1V2.500z" fill="none" stroke="#a3a099" stroke-width="1.900"/><path d="M8.500 4L3 9h2.500L4 13l5-5H6.500z" fill="#dfdbd2"/>`)],
          [1341, html`<svg width="10" height="6"><path d="M0 0h10L5 5.500z" fill="#dfdbd2"/></svg>`],
        ])}</div>
        <div class="dock">${DOCK.map(dockSvg)}</div>
        <div class="win">${this.shell()}${this.page()}</div>
      </div>
      <div class="toast">${run("DOWNLOAD VIDEO", 154, 16, "#fff", false, 17)}<span class="x"><svg width="12" height="12"><path d="M1 1l10 10M11 1L1 11" stroke="#eee" stroke-width="1.700"/></svg></span></div>`;
  }
}
